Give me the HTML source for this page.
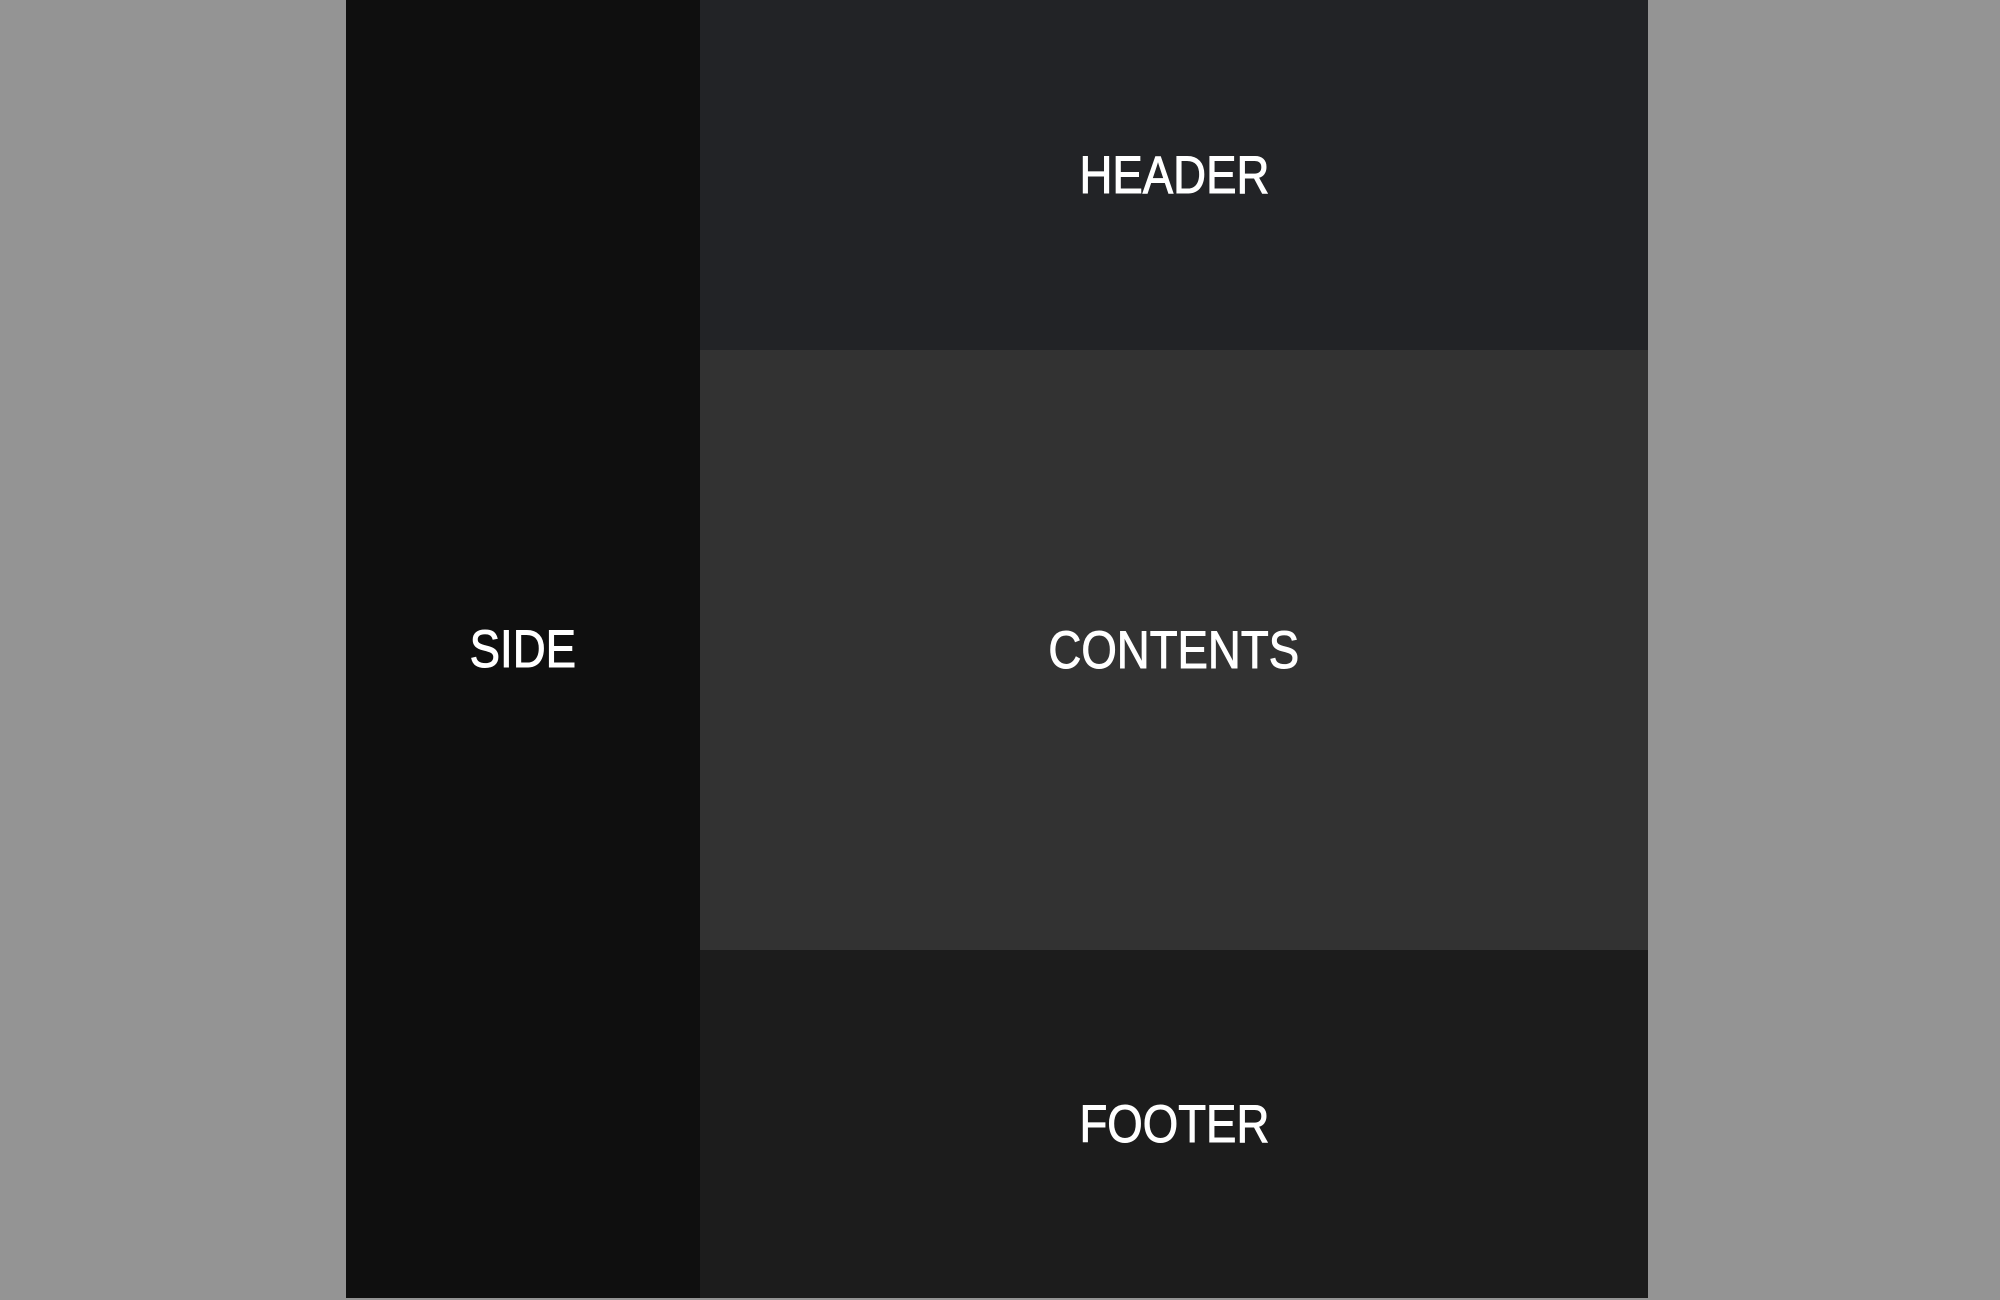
<!DOCTYPE html>
<html><head><meta charset="utf-8"><style>
html,body{margin:0;padding:0;width:2000px;height:1300px;background:#949494;overflow:hidden}
.wrap{position:absolute;left:346px;top:0;width:1302px;height:1298px}
.side{position:absolute;left:0;top:0;width:354px;height:1298px;background:#0f0f0f}
.hd{position:absolute;left:354px;top:0;width:948px;height:350px;background:#222326}
.ct{position:absolute;left:354px;top:350px;width:948px;height:600px;background:#323232}
.ft{position:absolute;left:354px;top:950px;width:948px;height:348px;background:#1c1c1c}
.wrap>div{display:flex;align-items:center;justify-content:center}
span{color:#fff;font-family:"Liberation Sans",sans-serif;font-size:53px;display:inline-block;transform:scaleX(0.86);-webkit-text-stroke:1px #fff;line-height:1}
</style></head><body>
<div class="wrap">
<div class="side"><span>SIDE</span></div>
<div class="hd"><span>HEADER</span></div>
<div class="ct"><span>CONTENTS</span></div>
<div class="ft"><span>FOOTER</span></div>
</div>
</body></html>
